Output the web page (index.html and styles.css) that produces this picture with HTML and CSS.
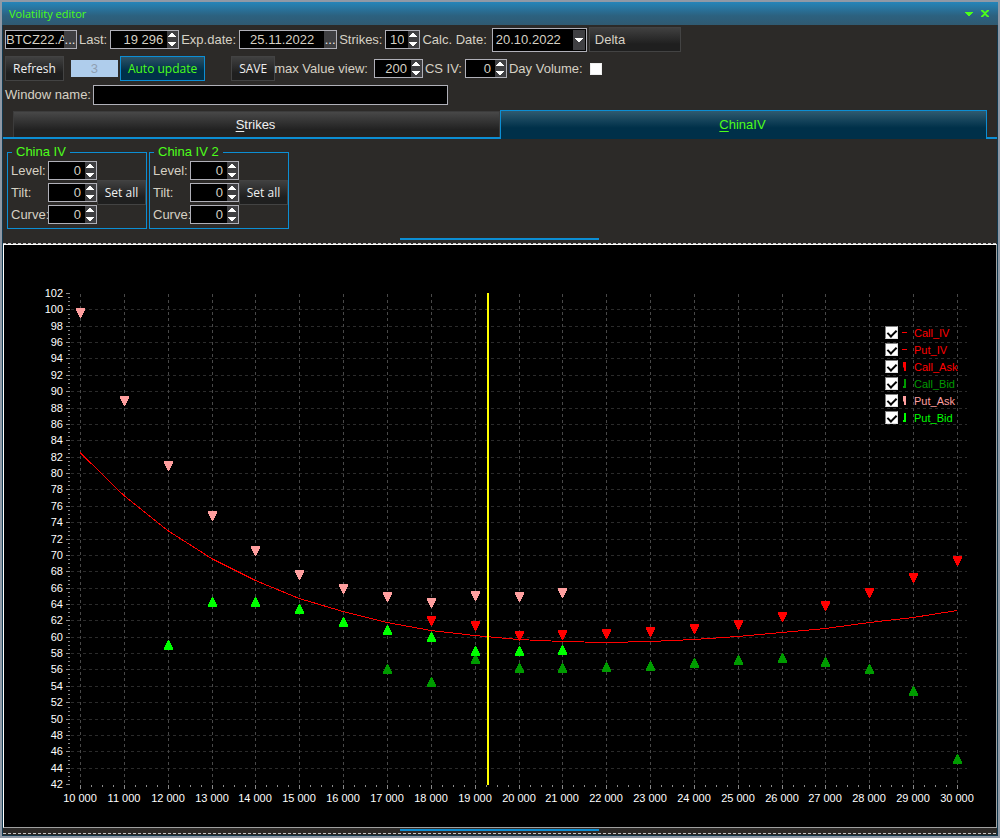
FILE: index.html
```html
<!DOCTYPE html>
<html lang="en">
<head>
<meta charset="utf-8">
<title>Volatility editor</title>
<link rel="stylesheet" href="styles.css">
</head>
<body>
<svg class="defs" aria-hidden="true">
  <symbol id="up" viewBox="0 0 8 4"><path d="M0 4V3H1V2H2V1H3V0H5V1H6V2H7V3H8V4Z"/></symbol>
  <symbol id="down" viewBox="0 0 8 4"><path d="M0 0V1H1V2H2V3H3V4H5V3H6V2H7V1H8V0Z"/></symbol>
</svg>
<main class="window">
  <header class="titlebar">
    <h1>Volatility editor</h1>
    <button class="winbtn" aria-label="Menu"><svg class="arrow"><use href="#down"/></svg></button>
    <button class="winbtn" aria-label="Close"><svg class="close" viewBox="0 0 8 7"><path d="M0 0H2L4 2L6 0H8V1L5 3.5L8 6V7H6L4 5L2 7H0V6L3 3.5L0 1Z"/></svg></button>
  </header>

  <section class="toolbar">
    <div class="row">
      <span class="field w-ticker"><input aria-label="Ticker" value="BTCZ22.A"><button class="dots" aria-label="Choose ticker">...</button></span>
      <label for="last">Last:</label>
      <span class="field spin w-last"><input id="last" value="19 296"><span class="steps"><button aria-label="Increase"><svg class="arrow"><use href="#up"/></svg></button><button aria-label="Decrease"><svg class="arrow"><use href="#down"/></svg></button></span></span>
      <label for="exp">Exp.date:</label>
      <span class="field w-date"><input id="exp" class="center" value="25.11.2022"><button class="dots" aria-label="Choose date">...</button></span>
      <label for="strikes">Strikes:</label>
      <span class="field spin w-strikes"><input id="strikes" value="10"><span class="steps"><button aria-label="Increase"><svg class="arrow"><use href="#up"/></svg></button><button aria-label="Decrease"><svg class="arrow"><use href="#down"/></svg></button></span></span>
      <label for="calc">Calc. Date:</label>
      <span class="combo"><select id="calc"><option>20.10.2022</option></select><span class="drop"><svg class="arrow"><use href="#down"/></svg></span></span>
      <button class="btn delta">Delta</button>
    </div>
    <div class="row">
      <button class="btn">Refresh</button>
      <input class="count" aria-label="Update interval" value="3" disabled>
      <button class="btn active">Auto update</button>
      <button class="btn save">SAVE</button>
      <label for="maxv" class="maxv">max Value view:</label>
      <span class="field spin w-num"><input id="maxv" value="200"><span class="steps"><button aria-label="Increase"><svg class="arrow"><use href="#up"/></svg></button><button aria-label="Decrease"><svg class="arrow"><use href="#down"/></svg></button></span></span>
      <label for="cs">CS IV:</label>
      <span class="field spin w-cs"><input id="cs" value="0"><span class="steps"><button aria-label="Increase"><svg class="arrow"><use href="#up"/></svg></button><button aria-label="Decrease"><svg class="arrow"><use href="#down"/></svg></button></span></span>
      <label for="dayvol">Day Volume:</label>
      <input type="checkbox" id="dayvol" class="plaincheck">
    </div>
    <div class="row name">
      <label for="wname">Window name:</label>
      <input id="wname" class="wname">
    </div>
  </section>

  <nav class="tabs" role="tablist">
    <button class="tab" role="tab" aria-selected="false"><u>S</u>trikes</button>
    <button class="tab selected" role="tab" aria-selected="true"><u>C</u>hinaIV</button>
  </nav>

  <section class="groups">
    <fieldset>
      <legend>China IV</legend>
      <div class="params">
        <label for="l1">Level:</label><span class="field spin"><input id="l1" value="0"><span class="steps"><button aria-label="Increase"><svg class="arrow"><use href="#up"/></svg></button><button aria-label="Decrease"><svg class="arrow"><use href="#down"/></svg></button></span></span>
        <label for="t1">Tilt:</label><span class="field spin"><input id="t1" value="0"><span class="steps"><button aria-label="Increase"><svg class="arrow"><use href="#up"/></svg></button><button aria-label="Decrease"><svg class="arrow"><use href="#down"/></svg></button></span></span>
        <label for="c1">Curve:</label><span class="field spin"><input id="c1" value="0"><span class="steps"><button aria-label="Increase"><svg class="arrow"><use href="#up"/></svg></button><button aria-label="Decrease"><svg class="arrow"><use href="#down"/></svg></button></span></span>
      </div>
      <button class="btn">Set all</button>
    </fieldset>
    <fieldset>
      <legend>China IV 2</legend>
      <div class="params">
        <label for="l2">Level:</label><span class="field spin"><input id="l2" value="0"><span class="steps"><button aria-label="Increase"><svg class="arrow"><use href="#up"/></svg></button><button aria-label="Decrease"><svg class="arrow"><use href="#down"/></svg></button></span></span>
        <label for="t2">Tilt:</label><span class="field spin"><input id="t2" value="0"><span class="steps"><button aria-label="Increase"><svg class="arrow"><use href="#up"/></svg></button><button aria-label="Decrease"><svg class="arrow"><use href="#down"/></svg></button></span></span>
        <label for="c2">Curve:</label><span class="field spin"><input id="c2" value="0"><span class="steps"><button aria-label="Increase"><svg class="arrow"><use href="#up"/></svg></button><button aria-label="Decrease"><svg class="arrow"><use href="#down"/></svg></button></span></span>
      </div>
      <button class="btn">Set all</button>
    </fieldset>
  </section>

  <div class="splitter"></div>

  <section class="chart">
    <svg id="plot" viewBox="0 0 992 582" role="img" aria-label="Implied volatility by strike"></svg>
    <div class="legend">
      <label class="red"><input type="checkbox" checked><i class="dash"></i>Call_IV</label>
      <label class="red"><input type="checkbox" checked><i class="dash"></i>Put_IV</label>
      <label class="red"><input type="checkbox" checked><i class="ask"></i>Call_Ask</label>
      <label class="green"><input type="checkbox" checked><i class="bid"></i>Call_Bid</label>
      <label class="pink"><input type="checkbox" checked><i class="ask"></i>Put_Ask</label>
      <label class="lime"><input type="checkbox" checked><i class="bid"></i>Put_Bid</label>
    </div>
  </section>
  <div class="splitter bottom"></div>
</main>
<script src="chart.js"></script>
</body>
</html>
```
FILE: styles.css
```css
* { box-sizing: border-box; }

body {
  margin: 0;
  background: #2c2a28;
  color: #d6d1c4;
  font: 13px/16px "Liberation Sans", Arial, sans-serif;
}

button, input, select { font: inherit; color: inherit; margin: 0; padding: 0; border: 0; border-radius: 0; }
svg { display: block; }
.defs { position: absolute; width: 0; height: 0; }

.window {
  display: flex;
  flex-direction: column;
  min-height: 100vh;
  background: #2c2a28;
  border: 2px solid #8f99a6;
  box-shadow: inset 1px 0 #12394f, inset -1px 0 #12394f, inset 0 -1px #12394f;
}

.titlebar {
  display: flex;
  align-items: center;
  height: 23px;
  padding: 0 5px 0 7px;
  background: linear-gradient(#2585b9, #2c617f 60%, #2f5a72);
  color: #4cff1a;
}
.titlebar h1 { flex: 1; margin: 0; font: 11px/16px "Open Sans", "Noto Sans", sans-serif; }
.winbtn { width: 16px; height: 15px; display: flex; align-items: center; justify-content: center; background: none; }
.arrow { width: 8px; height: 4px; fill: currentColor; shape-rendering: crispEdges; }
.close { width: 8px; height: 7px; fill: currentColor; }

.toolbar { display: flex; flex-direction: column; padding: 2px 3px 0; }
.row { display: flex; align-items: center; height: 25px; gap: 2px; margin-bottom: 4px; }
.row.name { height: 20px; margin-bottom: 0; }
.row label { white-space: nowrap; }
.row label + .field { margin-left: 1px; }

.field { display: flex; height: 19px; background: #000; border: 1px solid #b0b0b8; }
.field input { flex: 1; min-width: 0; background: #000; }
.field .center { text-align: center; }
.dots { width: 12px; background: #3f3f42; color: #eee; line-height: 12px; }
.spin input { text-align: right; padding-right: 4px; }
.steps { display: flex; flex-direction: column; justify-content: space-between; width: 11px; padding: 2px 2px 2px 1px; background: #3f3f42; color: #fff; }
.steps button { height: 4px; background: none; }
.w-ticker { width: 72px; }
.w-last { width: 69px; }
.w-date { width: 98px; }
.w-strikes { width: 35px; }
.w-num { width: 49px; }
.w-cs { width: 42px; }

.combo { position: relative; margin-left: 3px; height: 24px; border: 1px solid #b0b0b8; background: #000; width: 95px; }
.combo select { width: 100%; height: 100%; appearance: none; background: none; padding-left: 3px; }
.drop { position: absolute; top: 1px; right: 1px; bottom: 1px; width: 12px; display: flex; align-items: center; justify-content: center; background: #3f3f42; color: #fff; pointer-events: none; }

.btn {
  height: 25px;
  padding: 0 7px;
  border: 1px solid #434343;
  background: linear-gradient(#404040, #1f1f1f 70%);
  color: #f0f0f0;
  font: 12px/16px "Open Sans", "Noto Sans", sans-serif;
  white-space: nowrap;
}
.btn.delta { width: 92px; padding: 0 5px; text-align: left; color: #d6d1c4; font: 13px/16px "Liberation Sans", Arial, sans-serif; }
.btn.active { border-color: #0c8ed4; background: linear-gradient(#2c5266, #003049 60%); color: #4cff1a; }
.btn.save { margin-left: 24px; }
.count { width: 47px; height: 17px; margin-left: 5px; background: #afcdec; color: #8f9fb2; text-align: center; }
.maxv { margin-left: -3px; margin-right: 3px; }
.plaincheck { appearance: none; width: 12px; height: 12px; margin-left: 5px; background: #fff; border: 1px solid #eee; }
.wname { width: 355px; height: 20px; background: #000; border: 1px solid #b0b0b8; }

.tabs { display: flex; align-items: flex-end; height: 29px; margin: 5px 1px 0; padding: 0 10px; background: linear-gradient(#0c8ed4, #0c8ed4) bottom / 100% 2px no-repeat; }
.tab { flex: 1; height: 26px; margin-bottom: 2px; padding-right: 2px; border: 1px solid #3c3c3c; border-bottom: 0; background: linear-gradient(#484848, #222 70%); color: #f0f0f0; }
.tab.selected { height: 29px; margin-bottom: 0; border: 1px solid #0c8ed4; border-bottom: 0; background: linear-gradient(#2f5a70, #003049 60%); color: #4cff1a; }
.tab u { text-underline-offset: 2px; }

.groups { display: flex; gap: 2px; padding: 5px 5px 0; }
fieldset { display: flex; align-items: center; min-width: 0; width: 140px; height: 85px; margin: 0; padding: 0 0 3px 3px; border: 1px solid #0c8ed4; }
legend { margin-left: 1px; padding: 0 4px; height: 16px; color: #4cff1a; }
.params { display: grid; grid-template-columns: 37px 49px; row-gap: 3px; align-items: center; }
.params label { white-space: nowrap; }
fieldset .btn { flex: 1; padding: 0; }

.splitter { height: 15px; margin: 0 1px; background: linear-gradient(#0c8ed4, #0c8ed4) calc(50% - 1px) 9px / 199px 2px no-repeat, repeating-linear-gradient(90deg, #c8c8c8 0 3px, transparent 3px 5px) bottom / 100% 1px no-repeat; }
.splitter.bottom { height: 6px; background-position: calc(50% - 1px) 1px, bottom; }
.chart { position: relative; margin: 0 1px; background: #000; border: 1px solid #fff; border-right-color: #a0a0a0; border-bottom-color: #a0a0a0; }
#plot { width: 100%; }
#plot text { fill: #fff; font: 11px "Liberation Sans", Arial, sans-serif; }

.legend { position: absolute; top: 79px; right: 36px; width: 75px; font-size: 11px; }
.legend label { display: flex; align-items: center; height: 17px; white-space: nowrap; }
.legend input { appearance: none; flex: none; width: 13px; height: 13px; margin-right: 4px; background: #fff; border: 1px solid #808080; border-right-color: #e0e0e0; border-bottom-color: #e0e0e0; position: relative; }
.legend input:checked::after { content: ""; position: absolute; left: 3px; top: 1px; width: 4px; height: 7px; border: solid #000; border-width: 0 2px 2px 0; transform: rotate(45deg); }
.legend i { flex: none; width: 5px; margin-right: 7px; background: currentColor; }
.dash { height: 1px; }
.ask { height: 9px; clip-path: polygon(20% 0, 80% 0, 80% 100%, 40% 100%, 40% 60%, 20% 60%); }
.bid { height: 9px; clip-path: polygon(40% 0, 80% 0, 80% 100%, 20% 100%, 20% 78%, 40% 78%); }
.red { color: #f00; }
.green { color: #009b00; }
.pink { color: #ff9f9f; }
.lime { color: #0f0; }
```
FILE: chart.js
```js
const plot = document.getElementById('plot');
const left = 76, right = 953, top0 = 48, bottom = 539;
const stepX = (right - left) / 20;
const stepY = (bottom - top0) / 30;

function add(name, attrs, text) {
  const el = document.createElementNS('http://www.w3.org/2000/svg', name);
  for (const key in attrs) el.setAttribute(key, attrs[key]);
  if (text) el.textContent = text;
  plot.appendChild(el);
}
function line(x1, y1, x2, y2, color, dash) {
  add('path', { d: `M${x1} ${y1}L${x2} ${y2}`, stroke: color, 'stroke-width': 1, 'stroke-dasharray': dash || 'none', 'shape-rendering': 'crispEdges', fill: 'none' });
}

// Value axis, 42 to 102
for (let i = 0; i <= 30; i++) {
  const y = Math.round(bottom - i * stepY) + 0.5;
  if (i > 0 && i < 30) line(67, y, 963, y, '#2b2b2b', '3 3');
  line(62, y, 66, y, '#8a8a8a');
  if (i < 30) for (let k = 1; k < 4; k++) line(64, y - k * 4, 66, y - k * 4, '#8a8a8a');
  add('text', { x: 59, y: y + 3.5, 'text-anchor': 'end' }, String(42 + 2 * i));
}

// Strike axis, 10 000 to 30 000
for (let i = 0; i <= 20; i++) {
  const x = Math.round(left + i * stepX) + 0.5;
  line(x, 49, x, 539, '#484848', '3 3');
  line(x, 540, x, 544, '#8a8a8a');
  if (i < 20) for (let k = 1; k < 4; k++) line(x + k * 11, 540, x + k * 11, 542, '#8a8a8a');
  add('text', { x: x - 0.5, y: 557, 'text-anchor': 'middle' }, (10 + i) + ' 000');
}

// Smile curve
const curve = [207, 250, 285, 313, 335, 353, 366, 377, 385, 390, 394, 396, 397, 396, 394, 391, 387, 383, 377, 372, 365];
add('polyline', { points: curve.map((y, i) => `${left + i * stepX},${y + 0.5}`).join(' '), fill: 'none', stroke: '#f00', 'stroke-width': 1, 'shape-rendering': 'crispEdges' });

// Bid and ask quotes: first strike index, vertical centres
const series = [
  { start: 8, color: '#f00', dir: -1, ys: [376, 381, 391, 390, 389, 387, 384, 380, 372, 361, 348, 333, 316] },
  { start: 7, color: '#009b00', dir: 1, ys: [424, 437, 414, 423, 423, 422, 421, 418, 415, 413, 417, 424, 446, 514] },
  { start: 0, color: '#ff9f9f', dir: -1, ys: [68, 156, 221, 271, 306, 330, 344, 352, 358, 351, 352, 348] },
  { start: 2, color: '#0f0', dir: 1, ys: [400, 357, 357, 364, 377, 385, 392, 406, 406, 405] }
];
for (const s of series) {
  s.ys.forEach((y, i) => {
    const x = Math.round(left + (s.start + i) * stepX) + 0.5;
    const d = s.dir;
    const f = y + 5 * d;
    add('path', { d: `M${x - 4.5} ${f}H${x + 4.5}V${f - 2 * d}L${x + 0.5} ${f - 10 * d}H${x - 0.5}L${x - 4.5} ${f - 2 * d}Z`, fill: s.color, 'shape-rendering': 'crispEdges' });
  });
}

// Last price
add('rect', { x: 483, y: 48, width: 2, height: 492, fill: '#ff0' });
```
